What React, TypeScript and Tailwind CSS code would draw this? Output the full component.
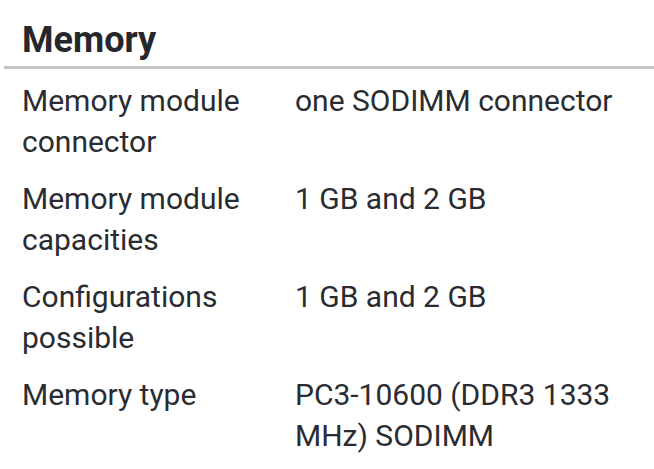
import React from "react";

const rows: [string[], string[]][] = [
  [["Memory module", "connector"], ["one SODIMM connector"]],
  [["Memory module", "capacities"], ["1 GB and 2 GB"]],
  [["Configurations", "possible"], ["1 GB and 2 GB"]],
  [["Memory type"], ["PC3-10600 (DDR3 1333", "MHz) SODIMM"]],
];

export default function App() {
  return (
    <div
      className="w-[654px] h-[469px] bg-white text-[#2a2c31] overflow-hidden"
      style={{ fontFamily: "Roboto, 'Liberation Sans', sans-serif" }}
    >
      <div className="pt-[18px] pl-[22px] text-[36px] leading-[44px] font-bold text-[#25272c]">
        Memory
      </div>
      <div className="ml-[4px] mt-[4px] h-[3px] bg-[#c5c5c5]" />
      <div className="pt-[11px] pl-[22px] flex flex-col gap-[16px]">
        {rows.map(([label, value], i) => (
          <div key={i} className="grid grid-cols-[273px_1fr] text-[30px] leading-[41px]">
            <div>
              {label.map((l, j) => (
                <div key={j}>{l}</div>
              ))}
            </div>
            <div>
              {value.map((v, j) => (
                <div key={j}>{v}</div>
              ))}
            </div>
          </div>
        ))}
      </div>
    </div>
  );
}
